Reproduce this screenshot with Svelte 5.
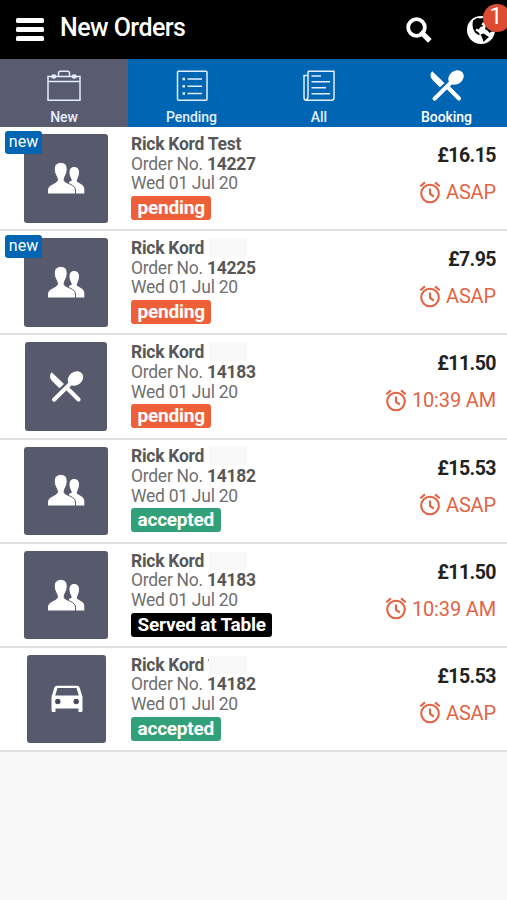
<script lang="ts">
  type Kind = 'people' | 'cutlery' | 'car'
  type Status = 'pending' | 'accepted' | 'served'

  interface Order {
    name: string
    number: string
    kind: Kind
    status: Status
    price: string
    due: string
    isNew?: boolean
    redacted?: boolean
    mark?: boolean
  }

  const tabs = ['New', 'Pending', 'All', 'Booking']

  const statusLabels: Record<Status, string> = {
    pending: 'pending',
    accepted: 'accepted',
    served: 'Served at Table',
  }

  const orders: Order[] = [
    { name: 'Rick Kord Test', number: '14227', kind: 'people', status: 'pending', price: '£16.15', due: 'ASAP', isNew: true },
    { name: 'Rick Kord', number: '14225', kind: 'people', status: 'pending', price: '£7.95', due: 'ASAP', isNew: true, redacted: true },
    { name: 'Rick Kord', number: '14183', kind: 'cutlery', status: 'pending', price: '£11.50', due: '10:39 AM', redacted: true },
    { name: 'Rick Kord', number: '14182', kind: 'people', status: 'accepted', price: '£15.53', due: 'ASAP', redacted: true },
    { name: 'Rick Kord', number: '14183', kind: 'people', status: 'served', price: '£11.50', due: '10:39 AM', redacted: true },
    { name: 'Rick Kord', number: '14182', kind: 'car', status: 'accepted', price: '£15.53', due: 'ASAP', redacted: true, mark: true },
  ]

  let active = $state('New')
</script>

{#snippet cutlery()}
  <path d="M2.2 1.2C-.2 4 .2 7.500 2.600 10L10 17.200 14.500 13Z" />
  <path d="M18.500 18 29 28.500" stroke="currentColor" stroke-width="4" stroke-linecap="round" />
  <path d="M4.500 28.700 21 12.500" stroke="currentColor" stroke-width="4" stroke-linecap="round" />
  <ellipse cx="26" cy="7.500" rx="8.200" ry="6.600" transform="rotate(-35 26 7.500)" />
{/snippet}

<div class="app">
  <header>
    <button class="menu" aria-label="Menu"><i></i><i></i><i></i></button>
    <h1>New Orders</h1>
    <button class="search" aria-label="Search">
      <svg width="26" height="26" viewBox="0 0 26 26" fill="none" stroke="currentColor">
        <circle cx="10.500" cy="10.500" r="8.300" stroke-width="3.800" />
        <path d="M16.500 16.500 22 22" stroke-width="5.200" stroke-linecap="square" />
      </svg>
    </button>
    <button class="globe" aria-label="Notifications">
      <svg width="28" height="28" viewBox="0 0 28 28">
        <circle cx="14" cy="14" r="14" fill="#fff" />
        <path
          d="M6 4.500 10 2 14 2.500 18 1 21 4 17.500 7 16 6 14.500 8.500 16.500 10 13.500 11 11.500 13.500 9.500 12.500 8.500 14.500 11 16 13 18.500 11.500 19 8 16.500 6 12.500 5.500 8.500Z"
          fill="#000"
        />
        <path d="M13.500 18.500 16.500 17.500 22 21 18.500 24 16.500 26 15.500 22.500Z" fill="#000" />
        <path d="M19 9 28 10 27.500 16 24.500 15.500 22.500 17 20.500 14.500 18 13Z" fill="#000" />
      </svg>
      <span class="count">1</span>
    </button>
  </header>

  <nav>
    {#each tabs as tab}
      <button class="tab" class:active={active === tab} onclick={() => (active = tab)}>
        <svg width="34" height="32" viewBox="0 0 34 32" fill="none" stroke="currentColor" stroke-width="1.500">
          {#if tab === 'New'}
            <path d="M1 11.500V30.300H33V11.500ZM1 11.500V6.500H33V11.500M11.500 6V3Q11.500 1.200 13.500 1.200H20.500Q22.500 1.200 22.500 3V6" />
            <path d="M6.500 6.500H7M27 6.500H27.500" stroke-width="4.500" stroke-linecap="round" />
          {:else if tab === 'Pending'}
            <rect x="2.500" y="1.300" width="29.500" height="29" rx="1" />
            <path d="M12.500 9H27M12.500 16.200H27M12.500 23.500H27" />
            <path d="M7.500 9H10M7.500 16.200H10M7.500 23.500H10" stroke-width="2.500" />
          {:else if tab === 'All'}
            <path d="M6 1.300H32V27.500Q32 30.300 29.500 30.300H4.500Q2 30.300 2 27.500V5.500H6V26.500Q6 28.500 4.500 30M6 5.500V1.300" />
            <path d="M9.500 6H19M9.500 11.700H28M9.500 17.800H24M9.500 23.800H28" />
          {:else}
            <g fill="currentColor" stroke="none">{@render cutlery()}</g>
          {/if}
        </svg>
        <span>{tab}</span>
      </button>
    {/each}
  </nav>

  <main>
    {#each orders as order}
      <article>
        <div class="side">
          <div class="tile {order.kind}">
            {#if order.kind === 'people'}
              <svg width="38" height="33" viewBox="0 0 38 33" fill="currentColor">
                <path d="M22 24V20L24.800 18.500C24.800 16.500 22.500 15 22.500 10.500 22.500 6.500 24.500 5 27.200 5S32 6.500 32 10.500C32 15 29.800 16.500 29.800 19.500 32.500 22 37.300 22.500 37.300 27V31.500H22Z" />
                <path
                  d="M13.800 .5C18 .5 20.200 3 20.200 7.500 20.200 12.500 17 14.500 17 18.500 19.500 22 28.500 22.500 28.500 28V32H.5V28C.5 22.500 8.500 22 10.500 18.500 10.500 14.500 7.300 12.500 7.300 7.500 7.300 3 9.600 .5 13.800 .5Z"
                  stroke="#575a6c"
                  stroke-width="1"
                />
              </svg>
            {:else if order.kind === 'cutlery'}
              <svg width="35" height="31" viewBox="0 0 34 31" fill="currentColor">{@render cutlery()}</svg>
            {:else}
              <svg width="32" height="28" viewBox="0 0 32 28" fill="currentColor">
                <path
                  fill-rule="evenodd"
                  d="M6 .8H26Q28 .8 28.700 2.800L31.500 12V25.500Q31.500 27 30 27H27.500V23.500H4.500V27H2Q.5 27 .5 25.500V12L3.300 2.800Q4 .8 6 .8ZM6.500 3 4.200 10.500H27.800L25.500 3Z"
                />
                <circle cx="6.800" cy="16.500" r="2.700" fill="#484a59" />
                <circle cx="25.200" cy="16.500" r="2.700" fill="#484a59" />
              </svg>
            {/if}
          </div>
          {#if order.isNew}
            <span class="new">new</span>
          {/if}
        </div>

        <div class="info">
          <div class="name">
            <b>{order.name}</b>
            {#if order.redacted}
              <i class:mark={order.mark}></i>
            {/if}
          </div>
          <div class="number">Order No. <b>{order.number}</b></div>
          <div class="date">Wed 01 Jul 20</div>
          <span class="status {order.status}">{statusLabels[order.status]}</span>
        </div>

        <div class="totals">
          <strong>{order.price}</strong>
          <div class="due">
            <svg width="22" height="23" viewBox="0 0 22 23" fill="none" stroke="currentColor" stroke-width="2.100">
              <circle cx="11" cy="12.500" r="8.800" />
              <path d="M1.300 5.300 6 1.400M16 1.400 20.700 5.300M11 7.500V13L14.800 15.500" />
            </svg>
            <span>{order.due}</span>
          </div>
        </div>
      </article>
    {/each}
  </main>
</div>

<style>
  :global(body) {
    margin: 0;
  }

  .app {
    width: 507px;
    height: 900px;
    overflow: hidden;
    background: #f8f8f8;
    font-family: Roboto, sans-serif;
  }

  button {
    border: 0;
    padding: 0;
    background: none;
    color: #fff;
    font: inherit;
    cursor: pointer;
  }

  svg {
    display: block;
  }

  header {
    height: 59px;
    background: #000;
    color: #fff;
    display: flex;
    align-items: center;
    box-sizing: border-box;
    padding: 0 12px 0 16px;
  }

  .menu {
    width: 28px;
    display: flex;
    flex-direction: column;
    gap: 4px;
  }

  .menu i {
    height: 5px;
    border-radius: 1.5px;
    background: #fff;
  }

  h1 {
    flex: 1;
    margin: 0 0 3px 16px;
    font-size: 25px;
    font-weight: 500;
    line-height: 30px;
    letter-spacing: -0.55px;
  }

  .search {
    margin-right: 35px;
  }

  .globe {
    position: relative;
  }

  .count {
    position: absolute;
    top: -12px;
    left: 16px;
    width: 28px;
    height: 28px;
    border-radius: 50%;
    background: #dc4c32;
    font-size: 23px;
    line-height: 26px;
    text-indent: -2px;
  }

  nav {
    height: 68px;
    display: grid;
    grid-template-columns: 128px 127px 128px 127px;
    background: #0065b3;
  }

  .tab {
    display: flex;
    flex-direction: column;
    align-items: center;
    padding-top: 11px;
    gap: 6px;
    color: #e3efff;
    font-size: 14px;
    font-weight: 500;
    line-height: 18px;
    letter-spacing: -0.05px;
  }

  .tab:last-child {
    color: #fff;
  }

  .tab.active {
    background: #595c6e;
  }

  article {
    height: 104.2px;
    box-sizing: border-box;
    display: flex;
    background: #fff;
    border-bottom: 2px solid #e0e0e0;
  }

  .side {
    position: relative;
    width: 131px;
    padding-top: 7px;
  }

  .tile {
    width: 84px;
    height: 88.5px;
    margin-left: 24px;
    border-radius: 3px;
    background: #575a6c;
    color: #fff;
    display: flex;
    align-items: center;
    justify-content: center;
  }

  .tile.cutlery {
    width: 82px;
    margin-left: 25px;
  }

  .tile.car {
    width: 79px;
    margin-left: 27px;
  }

  .new {
    position: absolute;
    top: 4px;
    left: 5px;
    width: 37px;
    height: 23px;
    border-radius: 3px;
    background: #0065b3;
    color: #fff;
    font-size: 16px;
    line-height: 22px;
    text-align: center;
  }

  .info {
    flex: 1;
    padding-top: 7.8px;
    color: #707070;
    font-size: 17.5px;
    line-height: 19.7px;
    letter-spacing: -0.27px;
  }

  b {
    color: #585858;
    font-weight: 700;
  }

  .name {
    display: flex;
  }

  .name i {
    width: 38px;
    height: 18px;
    margin-left: 5px;
    background: #f9f9f9;
  }

  .name i.mark::before {
    content: '';
    display: block;
    width: 1px;
    height: 2px;
    margin: 3px 0 0 -1px;
    background: #999;
  }

  .status {
    display: block;
    width: fit-content;
    height: 24px;
    margin-top: 2px;
    padding: 0 6.5px;
    border-radius: 3px;
    color: #fff;
    font-size: 19px;
    font-weight: 700;
    line-height: 23px;
    letter-spacing: -0.22px;
  }

  .pending {
    background: #ee6038;
  }

  .accepted {
    background: #32a078;
  }

  .served {
    background: #000;
  }

  .totals {
    display: flex;
    flex-direction: column;
    align-items: flex-end;
    padding: 17px 11px 0 0;
  }

  strong {
    color: #222;
    font-size: 19.5px;
    font-weight: 700;
    line-height: 24px;
    letter-spacing: -0.55px;
  }

  .due {
    display: flex;
    align-items: center;
    gap: 5px;
    margin-top: 12px;
    color: #e26444;
    font-size: 20px;
    line-height: 24px;
    letter-spacing: -0.15px;
  }
</style>
